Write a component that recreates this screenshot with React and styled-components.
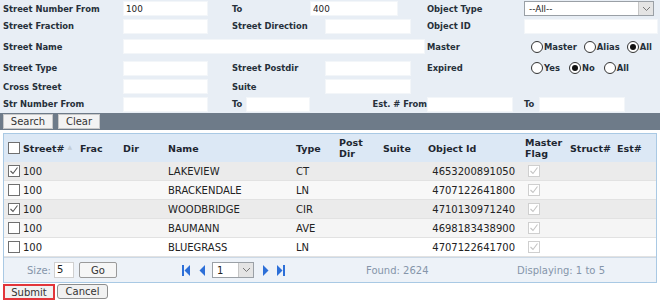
import styled, { createGlobalStyle } from "styled-components";

const GlobalStyle = createGlobalStyle`
  body {
    margin: 0;
    background: #ffffff;
    font-family: "DejaVu Sans", Verdana, sans-serif;
    color: #222;
  }
  * { box-sizing: border-box; }
`;

const Page = styled.div`
  width: 660px;
  height: 300px;
  overflow: hidden;
`;

// search form
const Form = styled.div`
  background: #e8eef5;
  padding-left: 3px;
`;

const FormRow = styled.div`
  display: flex;
  align-items: center;
  height: ${({ $h }) => $h}px;
`;

const Label = styled.span`
  flex-shrink: 0;
  width: ${({ $w }) => $w}px;
  margin-left: ${({ $ml }) => $ml || 0}px;
  text-align: ${({ $right }) => ($right ? "right" : "left")};
  font-size: 8.4px;
  font-weight: bold;
  color: #26303a;
  white-space: nowrap;
`;

const TextInput = styled.input`
  flex-shrink: 0;
  width: ${({ $w }) => $w}px;
  height: 15px;
  padding: 0 2px;
  border: 1px solid #f3f6f9;
  background: #fff;
  font-family: "DejaVu Sans", Verdana, sans-serif;
  font-size: 8.8px;
  color: #222;
  outline: none;
`;

const SelectBox = styled.div`
  flex-shrink: 0;
  display: flex;
  align-items: center;
  justify-content: space-between;
  width: ${({ $w }) => $w}px;
  height: ${({ $h }) => $h || 15}px;
  border: 1px solid #9aa0a6;
  background: #fff;
  padding-left: ${({ $pl }) => $pl || 4}px;
  font-size: ${({ $fs }) => $fs || 8.8}px;
  color: #222;
`;

const SelectArrow = styled.span`
  display: flex;
  align-items: center;
  justify-content: center;
  width: 15px;
  height: 100%;
  background: #e4e4e4;
  border-left: 1px solid #c6c6c6;
`;

const RadioGroup = styled.div`
  display: flex;
  align-items: center;
  padding-left: 7px;
  gap: ${({ $gap }) => $gap}px;
`;

const RadioItem = styled.label`
  display: flex;
  align-items: center;
  gap: 1px;
  font-size: 8.4px;
  font-weight: bold;
  color: #26303a;
`;

const RadioCircle = styled.span`
  display: flex;
  align-items: center;
  justify-content: center;
  width: 12px;
  height: 12px;
  border-radius: 50%;
  border: 1px solid #333;
  background: #fff;

  &::after {
    content: "";
    width: 6px;
    height: 6px;
    border-radius: 50%;
    background: ${({ $on }) => ($on ? "#111" : "transparent")};
  }
`;

// toolbar
const Toolbar = styled.div`
  display: flex;
  align-items: center;
  gap: 5px;
  height: 17px;
  padding-left: 3px;
  background: #6e7b89;
`;

const ToolButton = styled.button`
  width: ${({ $w }) => $w}px;
  height: 15px;
  padding: 0;
  border: 1px solid #c8c8c8;
  background: #f3f3f3;
  font-family: "DejaVu Sans", Verdana, sans-serif;
  font-size: 10px;
  color: #333;
  line-height: 13px;
`;

// results grid
const Grid = styled.div`
  width: 654px;
  margin: 3px 0 0 3px;
  border: 1px solid #a9c9e4;
`;

const COLS = "74px 43px 45px 128px 43px 44px 45px 94px 48px 47px 41px";

const HeaderRow = styled.div`
  display: grid;
  grid-template-columns: ${COLS};
  height: 28px;
  background: #dce8f5;
  align-items: center;
`;

const HeadCell = styled.div`
  display: flex;
  align-items: center;
  padding-left: ${({ $pl }) => $pl ?? 2}px;
  font-size: 9.5px;
  font-weight: bold;
  line-height: 11px;
  color: #1e2630;
  white-space: pre-line;
`;

const SortMark = styled.span`
  font-size: 6px;
  color: #c4ccd4;
  margin-left: 3px;
  align-self: flex-start;
  margin-top: -1px;
`;

const DataRow = styled.div`
  display: grid;
  grid-template-columns: ${COLS};
  height: 19px;
  align-items: center;
  background: ${({ $bg }) => $bg};
  border-bottom: 1px solid #e2e2e2;
`;

const Cell = styled.div`
  display: flex;
  align-items: center;
  justify-content: ${({ $right }) => ($right ? "flex-end" : "flex-start")};
  padding-left: ${({ $pl }) => $pl ?? 2}px;
  padding-right: ${({ $pr }) => $pr || 0}px;
  font-size: 10px;
  color: #222;
  gap: 3px;
`;

const Box = styled.span`
  display: flex;
  align-items: center;
  justify-content: center;
  width: 12px;
  height: 12px;
  border: 1px solid ${({ $dim }) => ($dim ? "#cfcfcf" : "#6f6f6f")};
  background: #fff;
`;

const Footer = styled.div`
  display: flex;
  align-items: center;
  height: 25px;
  background: #edf2f8;
  border-top: 1px solid #ccd9e6;
`;

const FootSection = styled.div`
  display: flex;
  align-items: center;
  width: ${({ $w }) => $w}px;
  padding-left: ${({ $pl }) => $pl || 0}px;
  font-size: 10px;
  color: #8595aa;
`;

const SizeInput = styled.div`
  width: 20px;
  height: 16px;
  margin-left: 3px;
  padding-left: 2px;
  border: 1px solid #d0d0d0;
  background: #fff;
  font-size: 10px;
  line-height: 14px;
  color: #222;
`;

const GoButton = styled.button`
  width: 38px;
  height: 16px;
  margin-left: 5px;
  padding: 0;
  border: 1px solid #9a9a9a;
  border-radius: 2px;
  background: #f6f6f6;
  font-family: "DejaVu Sans", Verdana, sans-serif;
  font-size: 10px;
  color: #333;
`;

const PagerIcon = styled.svg`
  display: block;
  flex-shrink: 0;
  margin-left: ${({ $ml }) => $ml || 0}px;
`;

const PageSelect = styled(SelectBox)`
  margin: 0 0 0 6px;
`;

const BottomBar = styled.div`
  display: flex;
  align-items: flex-start;
  gap: 2px;
  padding: 1px 0 0 3px;
`;

const FormButton = styled.button`
  width: ${({ $w }) => $w}px;
  height: ${({ $primary }) => ($primary ? 16 : 15)}px;
  padding: 0;
  border: ${({ $primary }) =>
    $primary ? "2px solid #e2353a" : "1px solid #8d8d8d"};
  border-radius: ${({ $primary }) => ($primary ? 0 : 3)}px;
  background: #f1f1f1;
  font-family: "DejaVu Sans", Verdana, sans-serif;
  font-size: 10px;
  color: #333;
  line-height: 11px;
`;

const HeadText = styled.span`
  margin-left: 3px;
`;

function Chevron() {
  return (
    <svg width="9" height="6" viewBox="0 0 9 6">
      <polyline points="1,1 4.5,4.5 8,1" fill="none" stroke="#777" strokeWidth="1" />
    </svg>
  );
}

function Check({ dim }) {
  return (
    <svg width="10" height="10" viewBox="0 0 10 10">
      <polyline
        points="1.5,5 4,7.5 8.5,1.5"
        fill="none"
        stroke={dim ? "#c4c4c4" : "#555"}
        strokeWidth="1.1"
      />
    </svg>
  );
}

function CheckBox({ checked, dim }) {
  return <Box $dim={dim}>{checked && <Check dim={dim} />}</Box>;
}

function Radio({ label, on }) {
  return (
    <RadioItem>
      <RadioCircle $on={on} />
      {label}
    </RadioItem>
  );
}

const rows = [
  { sel: true, num: "100", name: "LAKEVIEW", type: "CT", id: "4653200891050", bg: "#ebebeb" },
  { sel: false, num: "100", name: "BRACKENDALE", type: "LN", id: "4707122641800", bg: "#f8f8f8" },
  { sel: true, num: "100", name: "WOODBRIDGE", type: "CIR", id: "4710130971240", bg: "#ebebeb" },
  { sel: false, num: "100", name: "BAUMANN", type: "AVE", id: "4698183438900", bg: "#f5f5f5" },
  { sel: false, num: "100", name: "BLUEGRASS", type: "LN", id: "4707122641700", bg: "#ffffff" },
];

const BLUE = "#2c6fd8";

function App() {
  return (
    <Page>
      <GlobalStyle />
      <Form>
        <FormRow $h={17}>
          <Label $w={120}>Street Number From</Label>
          <TextInput $w={85} defaultValue="100" />
          <Label $ml={24} $w={78}>To</Label>
          <TextInput $w={88} defaultValue="400" />
          <Label $ml={29} $w={97}>Object Type</Label>
          <SelectBox $w={130}>
            --All--
            <SelectArrow><Chevron /></SelectArrow>
          </SelectBox>
        </FormRow>
        <FormRow $h={18}>
          <Label $w={120}>Street Fraction</Label>
          <TextInput $w={85} />
          <Label $ml={24} $w={93}>Street Direction</Label>
          <TextInput $w={86} />
          <Label $ml={16} $w={97}>Object ID</Label>
          <TextInput $w={134} />
        </FormRow>
        <FormRow $h={23}>
          <Label $w={120}>Street Name</Label>
          <TextInput $w={302} />
          <Label $ml={2} $w={97}>Master</Label>
          <RadioGroup $gap={7}>
            <Radio label="Master" />
            <Radio label="Alias" />
            <Radio label="All" on />
          </RadioGroup>
        </FormRow>
        <FormRow $h={20}>
          <Label $w={120}>Street Type</Label>
          <TextInput $w={85} />
          <Label $ml={24} $w={93}>Street Postdir</Label>
          <TextInput $w={86} />
          <Label $ml={16} $w={97}>Expired</Label>
          <RadioGroup $gap={9}>
            <Radio label="Yes" />
            <Radio label="No" on />
            <Radio label="All" />
          </RadioGroup>
        </FormRow>
        <FormRow $h={17}>
          <Label $w={120}>Cross Street</Label>
          <TextInput $w={85} />
          <Label $ml={24} $w={93}>Suite</Label>
          <TextInput $w={86} />
        </FormRow>
        <FormRow $h={18}>
          <Label $w={120}>Str Number From</Label>
          <TextInput $w={85} />
          <Label $ml={24} $w={14}>To</Label>
          <TextInput $w={64} />
          <Label $w={117} $right>Est. # From</Label>
          <TextInput $w={86} />
          <Label $ml={11} $w={15}>To</Label>
          <TextInput $w={86} />
        </FormRow>
      </Form>

      <Toolbar>
        <ToolButton $w={50}>Search</ToolButton>
        <ToolButton $w={42}>Clear</ToolButton>
      </Toolbar>

      <Grid>
        <HeaderRow>
          <HeadCell $pl={4}>
            <CheckBox />
            <HeadText>Street#</HeadText>
            <SortMark>▲</SortMark>
          </HeadCell>
          <HeadCell>Frac</HeadCell>
          <HeadCell>Dir</HeadCell>
          <HeadCell>Name</HeadCell>
          <HeadCell>Type</HeadCell>
          <HeadCell>{"Post\nDir"}</HeadCell>
          <HeadCell>Suite</HeadCell>
          <HeadCell>Object Id</HeadCell>
          <HeadCell $pl={5}>{"Master\nFlag"}</HeadCell>
          <HeadCell>Struct#</HeadCell>
          <HeadCell>Est#</HeadCell>
        </HeaderRow>

        {rows.map((r) => (
          <DataRow key={r.id} $bg={r.bg}>
            <Cell $pl={4}>
              <CheckBox checked={r.sel} />
              {r.num}
            </Cell>
            <Cell />
            <Cell />
            <Cell>{r.name}</Cell>
            <Cell>{r.type}</Cell>
            <Cell />
            <Cell />
            <Cell $right $pr={5}>{r.id}</Cell>
            <Cell $pl={8}>
              <CheckBox checked dim />
            </Cell>
            <Cell />
            <Cell />
          </DataRow>
        ))}

        <Footer>
          <FootSection $w={178} $pl={23}>
            Size:
            <SizeInput>5</SizeInput>
            <GoButton>Go</GoButton>
          </FootSection>
          <FootSection $w={184}>
            <PagerIcon width="9" height="11" viewBox="0 0 9 11">
              <rect x="0" y="0" width="2" height="11" fill={BLUE} />
              <polygon points="8,0 2.5,5.5 8,11" fill={BLUE} />
            </PagerIcon>
            <PagerIcon width="7" height="11" viewBox="0 0 7 11" $ml={8}>
              <polygon points="6,0 0.5,5.5 6,11" fill={BLUE} />
            </PagerIcon>
            <PageSelect $w={42} $h={16} $pl={4} $fs={10}>
              1
              <SelectArrow><Chevron /></SelectArrow>
            </PageSelect>
            <PagerIcon width="7" height="11" viewBox="0 0 7 11" $ml={8}>
              <polygon points="1,0 6.5,5.5 1,11" fill={BLUE} />
            </PagerIcon>
            <PagerIcon width="9" height="11" viewBox="0 0 9 11" $ml={7}>
              <polygon points="1,0 6.5,5.5 1,11" fill={BLUE} />
              <rect x="7" y="0" width="2" height="11" fill={BLUE} />
            </PagerIcon>
          </FootSection>
          <FootSection $w={151}>Found: 2624</FootSection>
          <FootSection $w={130}>Displaying: 1 to 5</FootSection>
        </Footer>
      </Grid>

      <BottomBar>
        <FormButton $w={52} $primary>Submit</FormButton>
        <FormButton $w={51}>Cancel</FormButton>
      </BottomBar>
    </Page>
  );
}

export default App;
